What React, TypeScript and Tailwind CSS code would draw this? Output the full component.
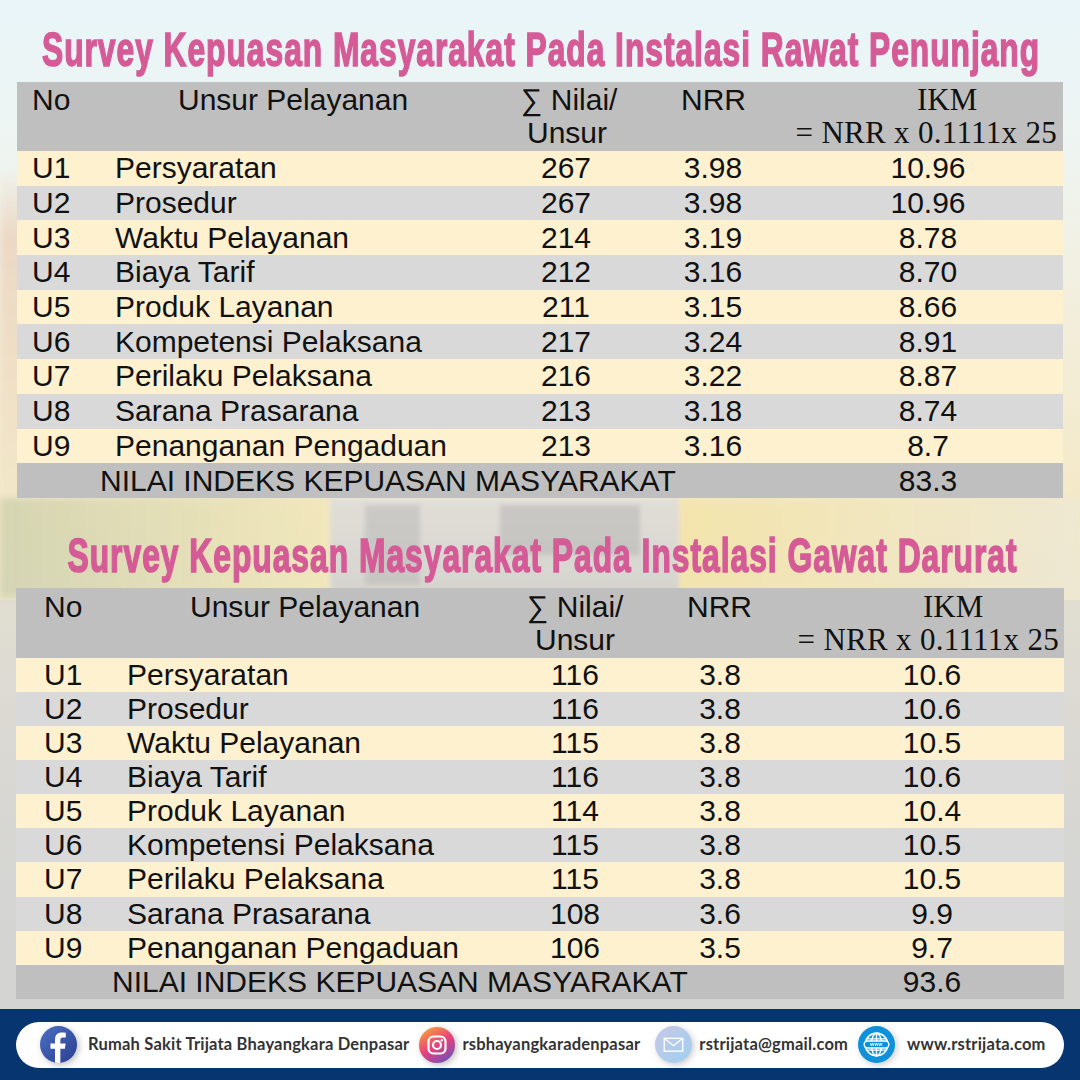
import React, { useLayoutEffect, useRef, useState } from "react";

type Row = [string, string, string, string, string];

const t1: Row[] = [
  ["U1", "Persyaratan", "267", "3.98", "10.96"],
  ["U2", "Prosedur", "267", "3.98", "10.96"],
  ["U3", "Waktu Pelayanan", "214", "3.19", "8.78"],
  ["U4", "Biaya Tarif", "212", "3.16", "8.70"],
  ["U5", "Produk Layanan", "211", "3.15", "8.66"],
  ["U6", "Kompetensi Pelaksana", "217", "3.24", "8.91"],
  ["U7", "Perilaku Pelaksana", "216", "3.22", "8.87"],
  ["U8", "Sarana Prasarana", "213", "3.18", "8.74"],
  ["U9", "Penanganan Pengaduan", "213", "3.16", "8.7"],
];

const t2: Row[] = [
  ["U1", "Persyaratan", "116", "3.8", "10.6"],
  ["U2", "Prosedur", "116", "3.8", "10.6"],
  ["U3", "Waktu Pelayanan", "115", "3.8", "10.5"],
  ["U4", "Biaya Tarif", "116", "3.8", "10.6"],
  ["U5", "Produk Layanan", "114", "3.8", "10.4"],
  ["U6", "Kompetensi Pelaksana", "115", "3.8", "10.5"],
  ["U7", "Perilaku Pelaksana", "115", "3.8", "10.5"],
  ["U8", "Sarana Prasarana", "108", "3.6", "9.9"],
  ["U9", "Penanganan Pengaduan", "106", "3.5", "9.7"],
];

function FitTitle({ text, width }: { text: string; width: number }) {
  const ref = useRef<HTMLSpanElement>(null);
  const [scale, setScale] = useState(1);
  useLayoutEffect(() => {
    if (ref.current) {
      const w = ref.current.offsetWidth;
      if (w > 0) setScale(width / w);
    }
  }, [text, width]);
  return (
    <span
      ref={ref}
      className="inline-block whitespace-nowrap font-['Liberation_Sans',Arial,sans-serif] text-[48px] font-bold leading-none tracking-[1.5px] text-[#d55b97] [-webkit-text-stroke:1.6px_#d55b97]"
      style={{ transform: `scaleX(${scale})`, transformOrigin: "center" }}
    >
      {text}
    </span>
  );
}

function Table1() {
  return (
    <div className="ml-[17px] w-[1046px] font-['Liberation_Sans',Arial,sans-serif] text-[30px] leading-none text-[#111]">
      <div className="grid h-[69px] grid-cols-[98px_400px_102px_140px_306px] bg-[#bfbfbf] leading-[33px]">
        <div className="pl-[15px] pt-[1px]">No</div>
        <div className="pl-[63px] pt-[1px]">Unsur Pelayanan</div>
        <div className="whitespace-nowrap pt-[1px]">
          <div className="pl-[6px]">∑ Nilai/</div>
          <div className="pl-[12px]">Unsur</div>
        </div>
        <div className="whitespace-nowrap pl-[64px] pt-[1px]">NRR</div>
        <div className="flex flex-col pt-[1px] font-['Liberation_Serif','Times_New_Roman',serif] text-[31px]">
          <div className="pl-[160px]">IKM</div>
          <div className="whitespace-nowrap pr-[6px] text-right tracking-[0.3px]">= NRR x 0.1111x 25</div>
        </div>
      </div>
      {t1.map((r, i) => (
        <div
          key={r[0]}
          className={`grid h-[34.7px] grid-cols-[98px_400px_102px_192px_238px_16px] items-center ${
            i % 2 === 0 ? "bg-[#fdf1d0]" : "bg-[#d9d9d9]"
          }`}
        >
          <div className="pl-[15px]">{r[0]}</div>
          <div className="whitespace-nowrap">{r[1]}</div>
          <div className="text-center">{r[2]}</div>
          <div className="text-center">{r[3]}</div>
          <div className="text-center">{r[4]}</div>
          <div />
        </div>
      ))}
      <div className="grid h-[34.7px] grid-cols-[792px_238px_16px] items-center bg-[#bfbfbf]">
        <div className="whitespace-nowrap pl-[83px]">NILAI INDEKS KEPUASAN MASYARAKAT</div>
        <div className="text-center">83.3</div>
        <div />
      </div>
    </div>
  );
}

function Table2() {
  return (
    <div className="ml-[16px] w-[1048px] font-['Liberation_Sans',Arial,sans-serif] text-[30px] leading-none text-[#111]">
      <div className="grid h-[70px] grid-cols-[111px_398px_100px_140px_299px] bg-[#bfbfbf] leading-[33px]">
        <div className="pl-[28px] pt-[2px]">No</div>
        <div className="pl-[63px] pt-[2px]">Unsur Pelayanan</div>
        <div className="whitespace-nowrap pt-[2px]">
          <div className="pl-[2px]">∑ Nilai/</div>
          <div className="pl-[10px]">Unsur</div>
        </div>
        <div className="whitespace-nowrap pl-[62px] pt-[2px]">NRR</div>
        <div className="flex flex-col pt-[2px] font-['Liberation_Serif','Times_New_Roman',serif] text-[31px]">
          <div className="pl-[158px]">IKM</div>
          <div className="whitespace-nowrap pr-[5px] text-right tracking-[0.3px]">= NRR x 0.1111x 25</div>
        </div>
      </div>
      {t2.map((r, i) => (
        <div
          key={r[0]}
          className={`grid h-[34.1px] grid-cols-[111px_398px_100px_190px_234px_15px] items-center ${
            i % 2 === 0 ? "bg-[#fdf1d0]" : "bg-[#d9d9d9]"
          }`}
        >
          <div className="pl-[28px]">{r[0]}</div>
          <div className="whitespace-nowrap">{r[1]}</div>
          <div className="text-center">{r[2]}</div>
          <div className="text-center">{r[3]}</div>
          <div className="text-center">{r[4]}</div>
          <div />
        </div>
      ))}
      <div className="grid h-[34.1px] grid-cols-[799px_234px_15px] items-center bg-[#bfbfbf]">
        <div className="whitespace-nowrap pl-[96px]">NILAI INDEKS KEPUASAN MASYARAKAT</div>
        <div className="text-center">93.6</div>
        <div />
      </div>
    </div>
  );
}

function FbIcon() {
  return (
    <svg width="37" height="37" viewBox="0 0 36 36" className="drop-shadow-[2px_2px_3px_rgba(0,0,0,0.25)]">
      <defs>
        <linearGradient id="fbg" x1="0" y1="0" x2="1" y2="1">
          <stop offset="0" stopColor="#4a6fc4" />
          <stop offset="1" stopColor="#2b3f8e" />
        </linearGradient>
        <clipPath id="fbc">
          <circle cx="18" cy="18" r="18" />
        </clipPath>
      </defs>
      <circle cx="18" cy="18" r="18" fill="url(#fbg)" />
      <path
        clipPath="url(#fbc)"
        fill="#fff"
        d="M19.8 36V22.2h4.4l.7-5.2h-5.1v-3.2c0-1.5.4-2.5 2.6-2.5h2.7V6.6c-.5-.1-2.1-.2-3.9-.2-3.9 0-6.6 2.4-6.6 6.8V17h-4.4v5.2h4.4V36z"
      />
    </svg>
  );
}

function IgIcon() {
  return (
    <svg width="36" height="36" viewBox="0 0 36 36" className="drop-shadow-[2px_2px_3px_rgba(0,0,0,0.25)]">
      <defs>
        <linearGradient id="igl" x1="0.2" y1="0" x2="0.8" y2="1">
          <stop offset="0" stopColor="#f7a23a" />
          <stop offset="0.5" stopColor="#e8407b" />
          <stop offset="1" stopColor="#6f4fbf" />
        </linearGradient>
      </defs>
      <circle cx="18" cy="18" r="18" fill="url(#igl)" />
      <rect x="9.5" y="9.5" width="17" height="17" rx="5" fill="none" stroke="#fff" strokeWidth="2.2" />
      <circle cx="18" cy="18" r="4" fill="none" stroke="#fff" strokeWidth="2.2" />
      <circle cx="22.8" cy="13.2" r="1.2" fill="#fff" />
    </svg>
  );
}

function MailIcon() {
  return (
    <svg width="37" height="37" viewBox="0 0 36 36" className="drop-shadow-[2px_2px_3px_rgba(0,0,0,0.2)]">
      <defs>
        <linearGradient id="mlg" x1="0" y1="0" x2="1" y2="1">
          <stop offset="0" stopColor="#c8c7e6" />
          <stop offset="1" stopColor="#9fd0ef" />
        </linearGradient>
      </defs>
      <circle cx="18" cy="18" r="18" fill="url(#mlg)" />
      <rect x="9" y="12" width="18" height="12.5" fill="none" stroke="#fff" strokeWidth="1.3" />
      <path d="M9 12l9 7.2 9-7.2" fill="none" stroke="#fff" strokeWidth="1.3" />
    </svg>
  );
}

function WebIcon() {
  return (
    <svg width="37" height="37" viewBox="0 0 36 36" className="drop-shadow-[2px_2px_3px_rgba(0,0,0,0.2)]">
      <circle cx="18" cy="18" r="18" fill="#0d91db" />
      <circle cx="18" cy="18" r="11" fill="none" stroke="#fff" strokeWidth="1.6" />
      <ellipse cx="18" cy="18" rx="5" ry="11" fill="none" stroke="#fff" strokeWidth="1.4" />
      <line x1="18" y1="7" x2="18" y2="29" stroke="#fff" strokeWidth="1.4" />
      <path d="M9 12.5h18M9 23.5h18" stroke="#fff" strokeWidth="1.4" />
      <rect x="6" y="14.6" width="24" height="6.8" rx="3.4" fill="#0d91db" stroke="#fff" strokeWidth="1.4" />
      <text
        x="18"
        y="19.9"
        textAnchor="middle"
        fontSize="5"
        fontWeight="700"
        fill="#fff"
        fontFamily="Liberation Sans, Arial, sans-serif"
      >
        www
      </text>
    </svg>
  );
}

function Footer() {
  return (
    <div className="flex h-[71px] items-center bg-[#073570] px-[16px] pt-[1px]">
      <div className="flex h-[46px] w-[1048px] items-center rounded-full bg-white pl-[24px] font-['Lato','Open_Sans',sans-serif] text-[16.5px] font-bold tracking-[0.2px] text-[#333]">
        <FbIcon />
        <span className="ml-[11px] whitespace-nowrap">Rumah Sakit Trijata Bhayangkara Denpasar</span>
        <span className="ml-[10px] flex">
          <IgIcon />
        </span>
        <span className="ml-[7px] whitespace-nowrap">rsbhayangkaradenpasar</span>
        <span className="ml-[15px] flex">
          <MailIcon />
        </span>
        <span className="ml-[7px] whitespace-nowrap">rstrijata@gmail.com</span>
        <span className="ml-[10px] flex">
          <WebIcon />
        </span>
        <span className="ml-[12px] whitespace-nowrap">www.rstrijata.com</span>
      </div>
    </div>
  );
}

function Background() {
  return (
    <div className="absolute inset-0 overflow-hidden bg-[linear-gradient(180deg,#e9f5f9_0%,#eef5f3_12%,#f3eedb_30%,#f4e9c6_48%,#ede6cf_60%,#dcdbd6_80%,#d6d6d4_100%)]">
      <div className="absolute left-0 top-[170px] h-[330px] w-[330px] bg-[linear-gradient(180deg,rgba(232,196,170,0),rgba(232,196,170,0.55)_20%,rgba(240,228,200,0.5))] blur-[3px]" />
      <div className="absolute left-0 top-[498px] h-[100px] w-[330px] bg-[linear-gradient(90deg,rgba(200,205,170,0.7),rgba(240,230,180,0.6))] blur-[3px]" />
      <div className="absolute left-[330px] top-[498px] h-[100px] w-[350px] bg-[linear-gradient(180deg,#dcdcdc,#cfcfcf)] opacity-80 blur-[2px]" />
      <div className="absolute left-[365px] top-[505px] h-[80px] w-[55px] bg-[#b7b7b7] opacity-50 blur-[2px]" />
      <div className="absolute left-[500px] top-[505px] h-[50px] w-[140px] bg-[#aeaeae] opacity-45 blur-[2px]" />
      <div className="absolute left-[680px] top-[498px] h-[100px] w-[400px] bg-[linear-gradient(90deg,rgba(243,226,160,0.7),rgba(236,232,215,0.7))] blur-[3px]" />
      <div className="absolute left-0 top-[600px] h-[480px] w-[1080px] bg-[linear-gradient(180deg,rgba(215,215,212,0.6),#d3d3d1)]" />
    </div>
  );
}

export default function App() {
  return (
    <div className="relative h-[1080px] w-[1080px] overflow-hidden">
      <Background />
      <div className="relative flex h-full flex-col">
        <div className="flex h-[82px] items-center justify-center pl-[2px] pt-[17px]">
          <FitTitle text="Survey Kepuasan Masyarakat Pada Instalasi Rawat Penunjang" width={998} />
        </div>
        <Table1 />
        <div className="flex h-[90px] items-center justify-center pl-[6px] pt-[27px]">
          <FitTitle text="Survey Kepuasan Masyarakat Pada Instalasi Gawat Darurat" width={950} />
        </div>
        <Table2 />
        <div className="h-[10px]" />
        <Footer />
      </div>
    </div>
  );
}
